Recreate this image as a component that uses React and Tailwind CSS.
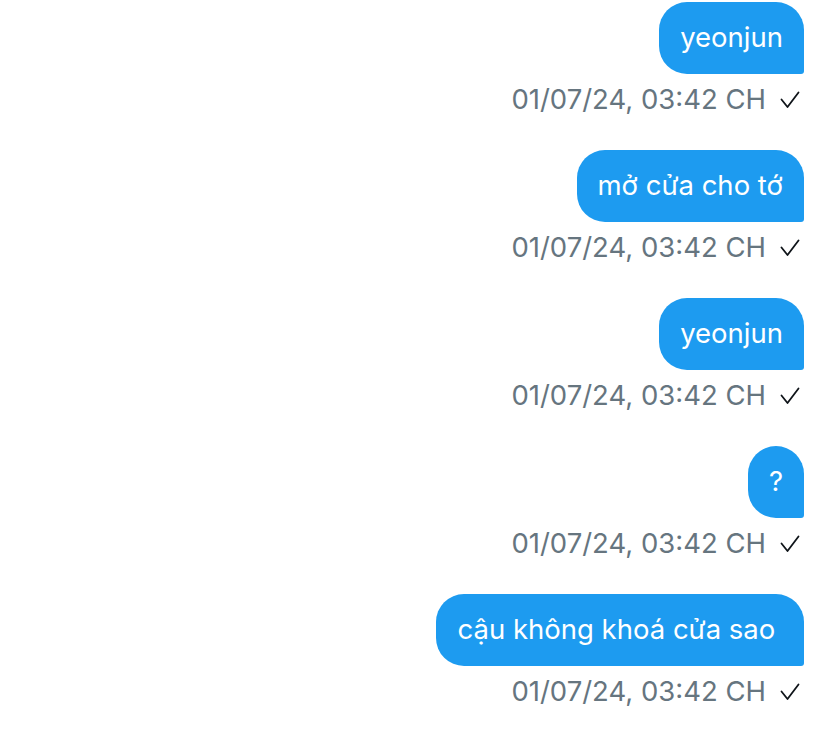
const MESSAGES = [
  { id: 1, text: 'yeonjun', time: '01/07/24, 03:42 CH' },
  { id: 2, text: 'mở cửa cho tớ', time: '01/07/24, 03:42 CH' },
  { id: 3, text: 'yeonjun', time: '01/07/24, 03:42 CH' },
  { id: 4, text: '?', time: '01/07/24, 03:42 CH' },
  { id: 5, text: 'cậu không khoá cửa sao ', time: '01/07/24, 03:42 CH' },
]

const Check = () => (
  <svg width="20" height="18" viewBox="0 0 20 18" fill="none" stroke="#0f1419" strokeWidth="1.8" strokeLinecap="round" strokeLinejoin="round">
    <path d="M1.5 8.5L7.5 16L18.5 1.5" />
  </svg>
)

export default function App() {
  return (
    <div className="min-h-screen bg-white pt-[2px] pr-6 font-['Inter',sans-serif]">
      <div className="flex flex-col items-end">
        {MESSAGES.map(m => (
          <div key={m.id} className="flex flex-col items-end mb-[35px]">
            <div className="h-[72px] px-[21px] flex items-center bg-[#1d9bf0] text-white text-[27.5px] rounded-[28px] rounded-br-[3px] whitespace-pre">
              {m.text}
            </div>
            <div className="mt-[11px] h-[30px] flex items-center gap-[14px] text-[27.5px] text-[#66757f] pr-[4px]">
              <span>{m.time}</span>
              <Check />
            </div>
          </div>
        ))}
      </div>
    </div>
  )
}
